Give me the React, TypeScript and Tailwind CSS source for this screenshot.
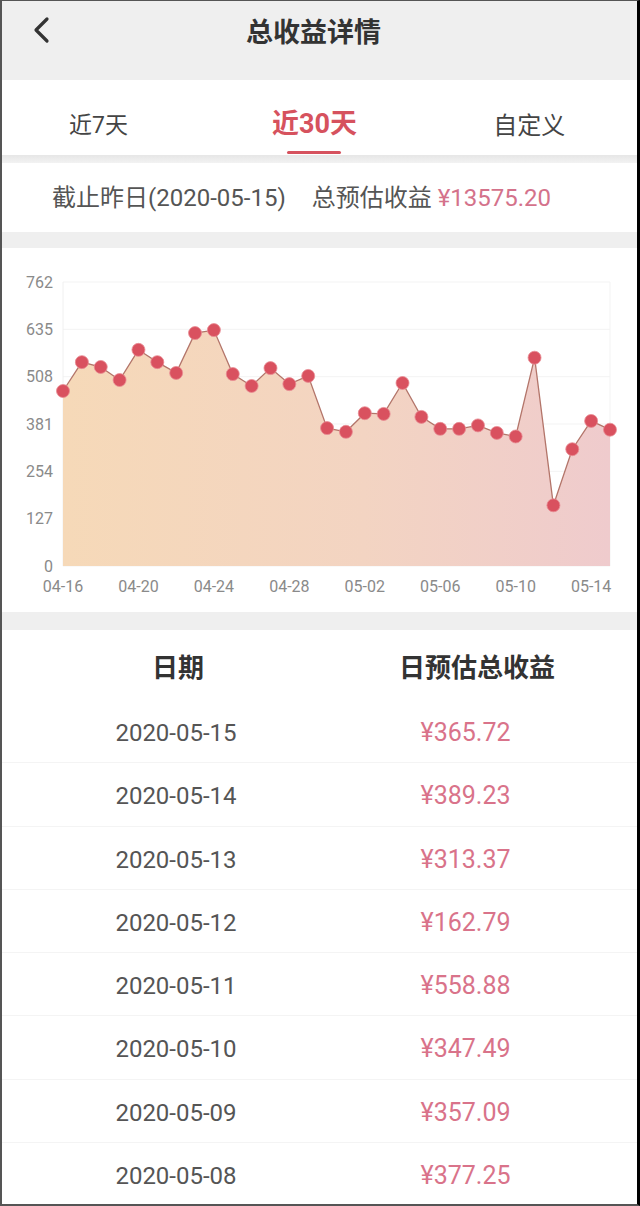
import React from 'react';

// ---------- Data ----------
const labels = [
  '04-16', '04-17', '04-18', '04-19', '04-20', '04-21', '04-22', '04-23', '04-24', '04-25',
  '04-26', '04-27', '04-28', '04-29', '04-30', '05-01', '05-02', '05-03', '05-04', '05-05',
  '05-06', '05-07', '05-08', '05-09', '05-10', '05-11', '05-12', '05-13', '05-14', '05-15',
];

const values = [
  469.5, 547, 534, 499, 580, 547, 518, 625, 633, 515,
  483, 531, 488, 510, 370, 360, 410, 408, 491, 400,
  368, 368, 377.25, 357.09, 347.49, 558.88, 162.79, 313.37, 389.23, 365.72,
];

const rows = [
  { date: '2020-05-15', amount: '¥365.72' },
  { date: '2020-05-14', amount: '¥389.23' },
  { date: '2020-05-13', amount: '¥313.37' },
  { date: '2020-05-12', amount: '¥162.79' },
  { date: '2020-05-11', amount: '¥558.88' },
  { date: '2020-05-10', amount: '¥347.49' },
  { date: '2020-05-09', amount: '¥357.09' },
  { date: '2020-05-08', amount: '¥377.25' },
];

const yTicks = [0, 127, 254, 381, 508, 635, 762];

const FONT = "font-['Roboto','Noto_Sans_CJK_SC',sans-serif]";

// ---------- Chart ----------
const X0 = 63;
const X1 = 610;
const Y0 = 318; // value 0
const YT = 34; // value 762
const MAX = 762;

const px = (i: number) => X0 + (i * (X1 - X0)) / (values.length - 1);
const py = (v: number) => Y0 - (v / MAX) * (Y0 - YT);

function EarningsChart() {
  const pts = values.map((v, i) => `${px(i).toFixed(1)},${py(v).toFixed(1)}`);
  const line = 'M' + pts.join(' L');
  const area = `${line} L${X1},${Y0} L${X0},${Y0} Z`;

  return (
    <svg width="635" height="364" viewBox="2 0 635 364" className="block">
      <defs>
        <linearGradient id="fillGrad" x1="0" y1="0" x2="1" y2="0">
          <stop offset="0%" stopColor="#f6d9b8" />
          <stop offset="55%" stopColor="#f3d4c2" />
          <stop offset="100%" stopColor="#efcbcd" />
        </linearGradient>
      </defs>

      {/* grid */}
      {yTicks.map((t) => (
        <line key={t} x1={X0} x2={X1} y1={py(t)} y2={py(t)} stroke="#f3f3f3" strokeWidth="1" />
      ))}
      <line x1={X0} x2={X0} y1={YT} y2={Y0} stroke="#f0f0f0" strokeWidth="1" />
      <line x1={X1} x2={X1} y1={YT} y2={Y0} stroke="#f3f3f3" strokeWidth="1" />

      <path d={area} fill="url(#fillGrad)" />
      <path d={line} fill="none" stroke="#b3756a" strokeWidth="1.3" />

      {values.map((v, i) => (
        <circle key={i} cx={px(i)} cy={py(v)} r="6.5" fill="#d9515f" stroke="#e98b93" strokeWidth="0.8" />
      ))}

      {/* y labels */}
      {yTicks.map((t) => (
        <text
          key={t}
          x={53}
          y={py(t) + 5.5}
          textAnchor="end"
          fontSize="16"
          fill="#8a8a8a"
          fontFamily="Roboto, 'Noto Sans CJK SC', sans-serif"
        >
          {t}
        </text>
      ))}

      {/* x labels */}
      {labels.map((l, i) =>
        i % 4 === 0 ? (
          <text
            key={l}
            x={px(i)}
            y={344}
            textAnchor="middle"
            fontSize="16"
            fill="#8a8a8a"
            fontFamily="Roboto, 'Noto Sans CJK SC', sans-serif"
          >
            {l}
          </text>
        ) : null
      )}
    </svg>
  );
}

// ---------- Page ----------
export default function App() {
  return (
    <div
      className={`${FONT} h-[1206px] w-[640px] overflow-hidden border-t border-b-2 border-l-2 border-r-[3px] border-t-[#555] border-b-[#555] border-l-[#555] border-r-black bg-white`}
    >
      {/* --- Header --- */}
      <header className="flex h-[79px] items-start bg-[#efefef]">
        <div className="flex w-[90px] pl-[29px] pt-[15px]">
          <svg width="20" height="28" viewBox="0 0 20 28">
            <polyline points="16,3 5,14 16,25" fill="none" stroke="#333" strokeWidth="3.2" strokeLinecap="round" strokeLinejoin="round" />
          </svg>
        </div>
        <h1 className="flex-1 pr-[102px] pt-[13px] text-center text-[27px] font-bold leading-[38px] text-[#333]">
          总收益详情
        </h1>
      </header>

      {/* --- Tabs --- */}
      <nav className="grid h-[75px] grid-cols-3 items-start bg-white">
        <div className="pt-[29px] pl-[67px] text-[23px] leading-[34px] text-[#444]">近7天</div>
        <div className="flex flex-col items-center pt-[26px] pr-[10px]">
          <span className="text-[27px] font-bold leading-[37px] text-[#d6525e]">近30天</span>
          <span className="mt-[8px] h-[3px] w-[54px] rounded-full bg-[#d6525e]" />
        </div>
        <div className="pt-[29px] pl-[68px] text-[24px] leading-[34px] text-[#444]">自定义</div>
      </nav>
      <div className="h-[8px] bg-gradient-to-b from-[#e6e6e6] to-[#f2f2f2]" />

      {/* --- Summary --- */}
      <section className="flex h-[69px] items-center gap-[26px] bg-white pl-[50px] text-[24px] text-[#555]">
        <span>截止昨日(2020-05-15)</span>
        <span>
          总预估收益 <span className="text-[#d4728b]">¥13575.20</span>
        </span>
      </section>
      <div className="h-[16px] bg-[#efefef]" />

      {/* --- Chart --- */}
      <section className="h-[364px] bg-white">
        <EarningsChart />
      </section>
      <div className="h-[18px] bg-[#efefef]" />

      {/* --- Table --- */}
      <section className="bg-white">
        <div className="grid h-[70px] grid-cols-[350px_1fr] items-start pt-[19px] text-[26px] font-bold leading-[38px] text-[#333]">
          <div className="pl-[2px] text-center">日期</div>
          <div className="pr-[35px] text-center">日预估总收益</div>
        </div>
        {rows.map((r) => (
          <div
            key={r.date}
            className="grid h-[63.3px] grid-cols-[350px_1fr] items-start border-b border-[#f4f4f4] pt-[16px] text-[24px] leading-[34px]"
          >
            <div className="pr-[2px] text-center text-[#555]">{r.date}</div>
            <div className="pr-[58px] text-center text-[25px] text-[#d9738a]">{r.amount}</div>
          </div>
        ))}
      </section>
    </div>
  );
}
